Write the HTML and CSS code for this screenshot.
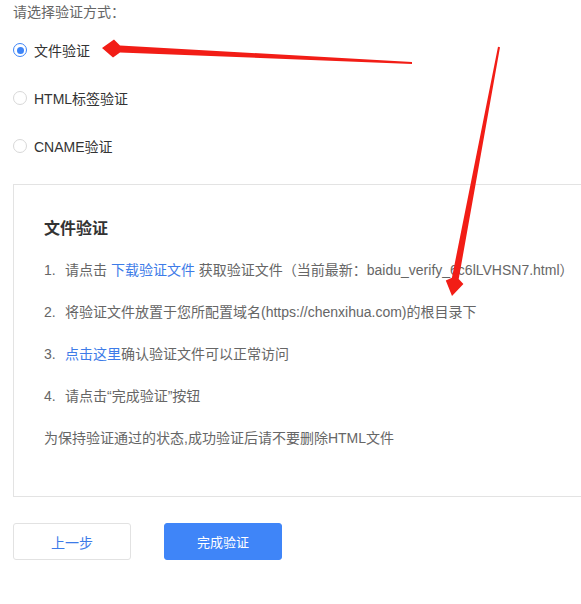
FILE: index.html
```html
<!DOCTYPE html>
<html lang="zh-CN">
<head>
<meta charset="utf-8">
<title>文件验证</title>
<link rel="stylesheet" href="styles.css">
</head>
<body>
<div class="page">
  <div class="prompt">请选择验证方式：</div>
  <div class="options">
    <label class="option"><span class="radio checked"></span><span class="opt-text">文件验证</span></label>
    <label class="option"><span class="radio"></span><span class="opt-text">HTML标签验证</span></label>
    <label class="option"><span class="radio"></span><span class="opt-text">CNAME验证</span></label>
  </div>
  <div class="panel">
    <div class="panel-title">文件验证</div>
    <div class="step"><span class="num">1.</span>请点击 <a class="link">下载验证文件</a> 获取验证文件（当前最新：baidu_verify_6c6lLVHSN7.html）</div>
    <div class="step"><span class="num">2.</span>将验证文件放置于您所配置域名(https://chenxihua.com)的根目录下</div>
    <div class="step"><span class="num">3.</span><a class="link">点击这里</a>确认验证文件可以正常访问</div>
    <div class="step"><span class="num">4.</span>请点击“完成验证”按钮</div>
    <div class="step">为保持验证通过的状态,成功验证后请不要删除HTML文件</div>
  </div>
  <div class="actions">
    <button class="btn btn-default">上一步</button>
    <button class="btn btn-primary">完成验证</button>
  </div>
</div>
<svg class="annotations" width="581" height="604" viewBox="0 0 581 604">
  <polygon class="arrow" points="102,48 114,39.5 120,45.5 412,62 412,64 120,52.5 113,57.5"/>
  <polygon class="arrow" points="452,296 445.8,280.5 451.9,277.7 498,46.8 500,47.2 458.7,279 463.4,283.9"/>
</svg>
</body>
</html>
```
FILE: styles.css
```css
html, body {
  margin: 0;
  padding: 0;
  overflow: hidden;
  background: #fff;
}
body {
  font-family: "Liberation Sans", "Noto Sans CJK SC", sans-serif;
  font-size: 14px;
  color: #666;
  position: relative;
  width: 581px;
  height: 604px;
}
.page {
  padding-left: 13px;
}
.prompt {
  line-height: 24px;
  color: #666;
}
.options {
  display: flex;
  flex-direction: column;
  gap: 24px;
  margin-top: 14px;
}
.option {
  display: flex;
  align-items: center;
  height: 24px;
  color: #333;
}
.radio {
  box-sizing: border-box;
  width: 14px;
  height: 14px;
  border: 1px solid #d8d8d8;
  border-radius: 50%;
  margin-right: 7px;
  display: flex;
  align-items: center;
  justify-content: center;
}
.radio.checked {
  border-color: #3d84f7;
}
.radio.checked::after {
  content: "";
  width: 7px;
  height: 7px;
  border-radius: 50%;
  background: #3d84f7;
}
.panel {
  margin-top: 26px;
  border: 1px solid #e3e3e3;
  border-right: none;
  padding: 32px 0 37px 30px;
  overflow: hidden;
}
.panel-title {
  font-size: 16px;
  font-weight: bold;
  color: #333;
  line-height: 24px;
  margin-bottom: 8px;
}
.step {
  line-height: 42px;
  color: #666;
  white-space: nowrap;
}
.num {
  display: inline-block;
  width: 21px;
}
.link {
  color: #3d7be8;
  cursor: pointer;
}
.actions {
  display: flex;
  gap: 33px;
  margin-top: 26px;
}
.btn {
  box-sizing: border-box;
  width: 118px;
  height: 37px;
  border-radius: 3px;
  font-family: "Liberation Sans", "Noto Sans CJK SC", sans-serif;
  font-size: 14px;
  cursor: pointer;
}
.btn-default {
  background: #fff;
  border: 1px solid #e2e2e2;
  color: #3d7be8;
}
.btn-primary {
  background: #3f85f8;
  border: 1px solid #3f85f8;
  color: #fff;
  font-size: 13px;
}
.annotations {
  position: absolute;
  left: 0;
  top: 0;
  pointer-events: none;
}
.arrow {
  fill: #f21d16;
}
```
